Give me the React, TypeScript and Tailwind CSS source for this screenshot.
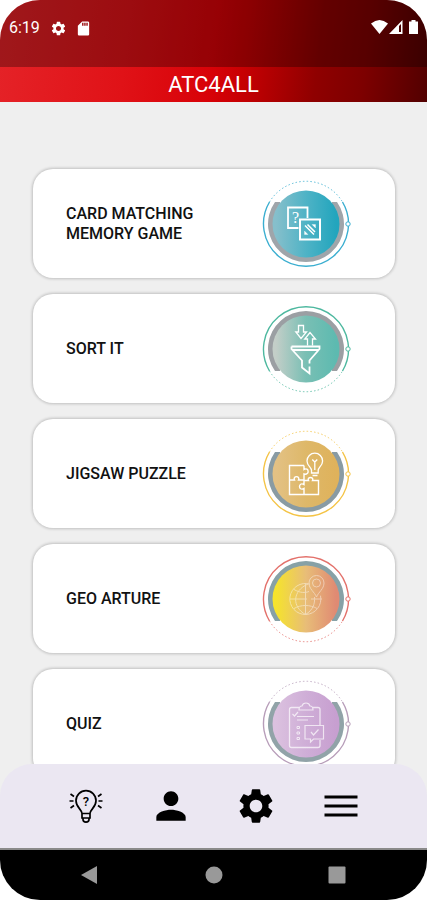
import type { ReactNode } from 'react'
import { MdPerson, MdSdCard, MdSettings } from 'react-icons/md'

type Game = {
  id: string
  title: string
  ring: string
  arc: string
  stops: string[]
  flipped?: boolean
  glyph: ReactNode
}

const games: Game[] = [
  {
    id: 'memory',
    title: 'CARD MATCHING MEMORY GAME',
    ring: '#3aaed0',
    arc: '#9fa5aa',
    stops: ['#86bfcb', '#4fb3c6', '#22a5bd'],
    glyph: (
      <>
        <path d="M37.5 49H27V28.500H46.500V39" strokeWidth="1.8" />
        <rect x="39" y="40.500" width="20" height="20" strokeWidth="2" />
        <path d="M44 46.500 53 55.500M46.500 45.500 54 53" strokeWidth="1.5" />
        <path d="M51 45.500h3.500V49ZM43.500 52v3.500H47Z" fill="#fff" strokeWidth="0.3" />
        <text x="34.500" y="44" textAnchor="middle" fontSize="16" fill="#fff" stroke="none" fontFamily="Liberation Serif, serif">?</text>
      </>
    )
  },
  {
    id: 'sort',
    title: 'SORT IT',
    ring: '#4db89f',
    arc: '#9b9fa3',
    stops: ['#c3cec8', '#79bfb4', '#5dbab0'],
    flipped: true,
    glyph: (
      <>
        <path d="M37.5 21.500h5V28H45.500L40 34.500 34.800 28h2.700ZM46.500 41.500V35H43.700L49 28.500 54.500 35H51.500v6.500" strokeWidth="1.3" />
        <path d="M30.500 42.500H58.500V45L48.500 56.500V59.500M30.500 42.500V45L41 56.500V63.500L48.500 69.500V62.500M31 46H58" strokeWidth="1.8" />
      </>
    )
  },
  {
    id: 'jigsaw',
    title: 'JIGSAW PUZZLE',
    ring: '#f4c344',
    arc: '#899ba3',
    stops: ['#e3c184', '#deb869', '#dfb25b'],
    glyph: (
      <>
        <path d="M43 36.500H28.500V65.500H57.500V51.500H51.500c2-4-6-4-4 0H43V55.500c-6-3-6 7 0 4v6M43 36.500v4c5-3 6 6 0 4.500V51.500M28.500 51h5c-2-4.500 6-4.500 4 0H43" strokeWidth="1.4" />
        <path d="M50.500 44V41.500C50.500 38 46 37 46 32a7.800 7.800 0 0 1 15.600 0c0 5-4.400 6-4.400 9.500V44ZM51.500 46.500h5M53.800 41V33l-2.500-2.500M53.800 33l2.500-2.500" strokeWidth="1.3" />
      </>
    )
  },
  {
    id: 'geo',
    title: 'GEO ARTURE',
    ring: '#e3716b',
    arc: '#87a1a6',
    stops: ['#f5e32c', '#e8bd78', '#e08a73'],
    flipped: true,
    glyph: (
      <g opacity="0.45">
        <path d="M49 30.200a15.500 15.500 0 1 0 10.500 11.500M44.500 29.500v31M29 45H46M50 45h11M47 30c-16 7-16 23-2.500 30.500M44.500 60.500C52 56 54 50 53.500 43M33 35.500c6 3.500 11 3.500 15 2M33 54.500c7-4 16-4 23 0" />
        <path d="M55.500 43c-2-5-7.500-8-7.500-14a7.500 7.500 0 0 1 15 0c0 6-5.500 9-7.500 14Z" />
        <circle cx="55.500" cy="29" r="4" />
      </g>
    )
  },
  {
    id: 'quiz',
    title: 'QUIZ',
    ring: '#b79db9',
    arc: '#91a3a8',
    stops: ['#dbc1df', '#cfaed7', '#c79fd0'],
    glyph: (
      <g opacity="0.7">
        <path d="M38 28.500H30.500a2 2 0 0 0-2 2V66.500a2 2 0 0 0 2 2H57a2 2 0 0 0 2-2V61M59 46V30.500a2 2 0 0 0-2-2H51.500" strokeWidth="1.3" />
        <path d="M38 31c0-3 1.500-4 3-4 1-4 7-4 8 0 1.500 0 3 1 3 4ZM31.500 35l2 2 3.500-4" strokeWidth="1.2" />
        <path d="M36 37.500H53M36 41h11M36 47.500h2.500v2H36ZM36 53h2.500v2H36ZM36 58.500h2.500v2H36Z" />
        <path d="M44 46.500H62.500V60H52.500L49.500 63V60H44ZM50 53l2.500 3 5-5.500" strokeWidth="1.2" />
      </g>
    )
  }
]

function GameBadge({ game }: { game: Game }) {
  const gradientId = `disc-${game.id}`

  return (
    <svg viewBox="0 0 90 90" className="size-[90px] shrink-0" fill="none" aria-hidden="true">
      <defs>
        <linearGradient id={gradientId} x1="0" y1="0" x2="1" y2="0">
          <stop offset="0.05" stopColor={game.stops[0]} />
          <stop offset="0.5" stopColor={game.stops[1]} />
          <stop offset="0.95" stopColor={game.stops[2]} />
        </linearGradient>
      </defs>
      <g transform={game.flipped ? 'matrix(1 0 0 -1 0 90)' : undefined}>
        <path d="M8.500 23A42.500 42.500 0 1 0 81.500 23" stroke={game.ring} strokeWidth="1.4" />
        <path d="M8.500 23A42.500 42.500 0 0 1 81.500 23" stroke={game.ring} strokeWidth="1" strokeDasharray="1.5 2.2" opacity="0.8" />
        <path d="M14 23A38 38 0 1 0 76 23Z" fill={game.arc} />
        <path d="M19 23A34 34 0 0 1 71 23L71 24H19Z" fill="#fff" />
      </g>
      <circle cx="45" cy="45" r="33.5" fill={`url(#${gradientId})`} />
      <circle cx="87" cy="45" r="2.2" fill="#fff" stroke={game.ring} />
      <g stroke="#fff" strokeWidth="1">{game.glyph}</g>
    </svg>
  )
}

function StatusBar() {
  return (
    <div className="flex h-[67px] items-start justify-between bg-black/30 pt-[18px] pr-[7px] pl-[9px]">
      <div className="flex h-5 items-center">
        <span className="w-[41px] text-base leading-5">6:19</span>
        <MdSettings className="size-[17px]" />
        <MdSdCard className="ml-2 size-[17px]" />
      </div>
      <svg viewBox="0 0 49 16" className="mt-px h-4 w-[49px]" fill="currentColor" aria-hidden="true">
        <path d="M0 4.500Q8.500-2.500 17 4.500L8.500 15Z" />
        <path d="M31.500 1v14H18ZM28 7v6h2V5Z" fillRule="evenodd" />
        <path d="M40.500 1h4v1.500H47V15H38V2.500h2.500Z" />
      </svg>
    </div>
  )
}

function IdeaIcon() {
  return (
    <svg viewBox="0 0 34 34" className="size-[34px]" fill="none" stroke="currentColor" strokeWidth="1.7" aria-hidden="true">
      <path d="M13 24.500c0-4-6-6-6-12.800a10 10 0 0 1 20 0C27 18.500 21 20.500 21 24.500ZM13 24.500V29h8V24.500M14 29v1.500c0 3.500 6 3.500 6 0V29" />
      <path d="M1.500 5 5 7.500M0.500 12h4M1.500 19 5 16.500M32.500 5 29 7.500M33.500 12h-4M32.500 19 29 16.500" />
      <text x="17" y="17" textAnchor="middle" fontSize="13" fontWeight="500" fill="currentColor" stroke="none" fontFamily="Roboto, sans-serif">?</text>
    </svg>
  )
}

function MenuIcon() {
  return (
    <svg viewBox="0 0 34 24" className="h-6 w-[34px]" stroke="currentColor" strokeWidth="3" aria-hidden="true">
      <path d="M0.500 3h33M0.500 12h33M0.500 21h33" />
    </svg>
  )
}

const tabs = [
  { label: 'Ideas', icon: <IdeaIcon /> },
  { label: 'Profile', icon: <MdPerson className="size-11" /> },
  { label: 'Settings', icon: <MdSettings className="size-[42px]" /> },
  { label: 'Menu', icon: <MenuIcon /> }
]

const systemKeys = [
  { label: 'Back', shape: <path d="M0 9 16 0v18Z" /> },
  { label: 'Home', shape: <circle cx="9" cy="9" r="8.5" /> },
  { label: 'Recents', shape: <rect x="0.500" y="0.500" width="17" height="17" rx="1" /> }
]

export default function App() {
  return (
    <div className="flex h-screen flex-col overflow-hidden rounded-[40px] bg-[#efefef] font-[Roboto,sans-serif]">
      <header className="bg-[linear-gradient(97deg,#e52328_0%,#e01217_30%,#d80208_50%,#c80003_57%,#8f0000_74%,#7d0000_85%,#520000_100%)] text-white">
        <StatusBar />
        <h1 className="flex h-[35px] items-center justify-center text-[22px] leading-7">ATC4ALL</h1>
      </header>

      <main className="-mb-8 flex min-h-0 flex-1 flex-col gap-4 overflow-y-auto pt-[67px] pr-8 pb-16 pl-[33px] [scrollbar-width:none]">
        {games.map(game => (
          <button
            key={game.id}
            type="button"
            className="flex h-[109px] w-full shrink-0 items-center justify-between rounded-[20px] bg-white pr-11 pl-[33px] text-left shadow-[0_0_3px_1px_rgba(0,0,0,0.2)]"
          >
            <span className="w-36 text-base leading-5 font-medium text-[#111]">{game.title}</span>
            <GameBadge game={game} />
          </button>
        ))}
      </main>

      <nav className="relative flex h-[84px] shrink-0 rounded-t-[32px] bg-[#ebe7f2] px-[43px] text-black">
        {tabs.map(tab => (
          <button key={tab.label} type="button" aria-label={tab.label} className="flex flex-1 items-center justify-center">
            {tab.icon}
          </button>
        ))}
      </nav>

      <footer className="flex h-[52px] shrink-0 border-t-2 border-[#8a8a8a] bg-black px-7 text-[#999]">
        {systemKeys.map(key => (
          <button key={key.label} type="button" aria-label={key.label} className="flex flex-1 items-center justify-center">
            <svg viewBox="0 0 18 18" className="size-[18px]" fill="currentColor" aria-hidden="true">{key.shape}</svg>
          </button>
        ))}
      </footer>
    </div>
  )
}
